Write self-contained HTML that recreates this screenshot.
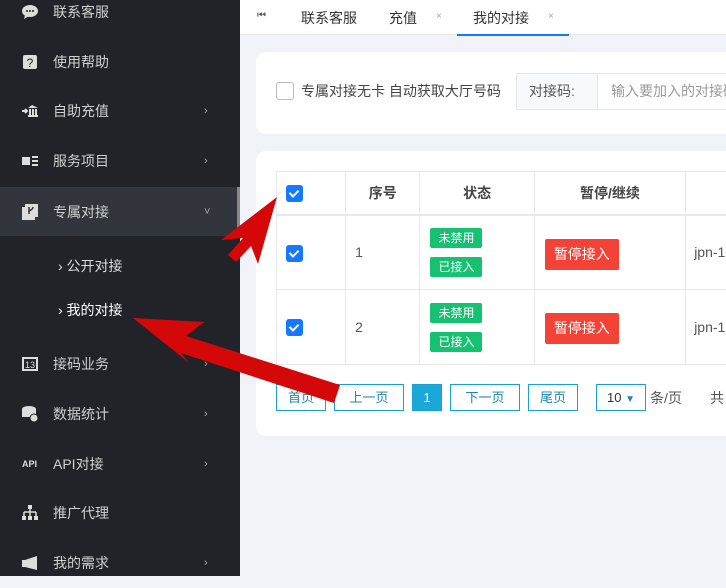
<!DOCTYPE html>
<html><head><meta charset="utf-8"><style>
*{margin:0;padding:0;box-sizing:border-box}
body{width:726px;height:576px;overflow:hidden;background:#f2f3f8;font-family:"Liberation Sans","Noto Sans CJK SC",sans-serif;position:relative}
.sb{position:absolute;left:0;top:0;width:240px;height:576px;background:#212329}
.it{position:absolute;left:0;width:240px;height:50px;color:#d0d0d0;font-size:14px;line-height:50px}
.it .t{position:absolute;left:53px}
.it .ic{position:absolute;left:22px;top:17px;width:16px;height:16px}
.it .ar{position:absolute;left:204px;font-size:11px;color:#aaa}
.sub{position:absolute;left:58px;color:#ddd;font-size:14px}
.top{position:absolute;left:240px;top:0;width:486px;height:35px;background:#fff;border-bottom:1px solid #e8e8e8;font-size:14px;color:#333}
.top span{position:absolute;top:8px}
.x{font-size:10px;color:#aaa;top:11px!important}
.card{position:absolute;left:256px;width:490px;background:#fff;border-radius:10px}
.cb{position:absolute;width:17px;height:17px;border-radius:3px;background:#1677ff}
.cb:after{content:"";position:absolute;left:5px;top:3px;width:4px;height:7px;border:solid #fff;border-width:0 2px 2px 0;transform:rotate(45deg)}
table{position:absolute;left:20px;top:20px;border-collapse:collapse;font-size:14px;color:#555}
td,th{border:1px solid #e8e8e8;position:relative}
th{height:43px;font-weight:bold;color:#444;border-bottom:2px solid #e8e8e8}
td{height:75px}
.tag{display:block;width:52px;height:20px;background:#16c172;color:#fff;font-size:12px;line-height:20px;text-align:center;border-radius:2px;margin:0 0 9px 10px}
.btn{position:absolute;left:10px;top:23px;width:74px;height:31px;background:#f44336;color:#fff;border-radius:2px;font-size:14px;line-height:31px;text-align:center}
.pg{position:absolute;top:384px;height:27px;border:1px solid #1aa0d4;color:#1a86b0;font-size:13px;line-height:25px;text-align:center;background:#fff}
</style></head><body>
<div class="sb">
<div class="it" style="top:-13px"><svg class="ic" viewBox="0 0 16 16"><ellipse cx="8" cy="7" rx="8" ry="6" fill="#ddd"/><path d="M3 11 L2 15 L7 12Z" fill="#ddd"/><circle cx="5" cy="7" r="1" fill="#212329"/><circle cx="8" cy="7" r="1" fill="#212329"/><circle cx="11" cy="7" r="1" fill="#212329"/></svg><span class="t">联系客服</span></div>
<div class="it" style="top:37px"><svg class="ic" viewBox="0 0 16 16"><rect x="1" y="1" width="14" height="14" rx="2" fill="#ddd"/><text x="8" y="13" font-size="12" text-anchor="middle" fill="#212329" font-family="Liberation Sans">?</text></svg><span class="t">使用帮助</span></div>
<div class="it" style="top:86px"><svg class="ic" viewBox="0 0 16 16"><path d="M0 8h4M3 6l2 2-2 2" stroke="#ddd" stroke-width="2" fill="none"/><path d="M10 2l6 3H6z M7 6h2v6H7z M10 6h2v6h-2z M13 6h2v6h-2z M6 12h10v2H6z" fill="#ddd"/></svg><span class="t">自助充值</span><span class="ar">›</span></div>
<div class="it" style="top:136px"><svg class="ic" viewBox="0 0 16 16"><rect x="0" y="4" width="8" height="8" fill="#ddd"/><path d="M10 4h6M10 8h6M10 12h6" stroke="#ddd" stroke-width="2"/></svg><span class="t">服务项目</span><span class="ar">›</span></div>
<div class="it" style="top:187px;background:#32353b;height:49px"><svg class="ic" viewBox="0 0 16 16"><rect x="3" y="0" width="13" height="13" fill="#ddd"/><rect x="0" y="3" width="3" height="13" fill="#ddd"/><rect x="0" y="13" width="13" height="3" fill="#ddd"/><path d="M7 3v7M11 3c0 3-4 3-4 5" stroke="#32353b" stroke-width="1.5" fill="none"/></svg><span class="t">专属对接</span><span class="ar">˅</span><div style="position:absolute;left:237px;top:0;width:3px;height:49px;background:#888"></div></div>
<div class="sub" style="top:256px">› 公开对接</div>
<div class="sub" style="top:300px;color:#fff">› 我的对接</div>
<div class="it" style="top:339px"><svg class="ic" viewBox="0 0 16 16"><rect x="0" y="1" width="16" height="14" fill="#ddd"/><rect x="2" y="3" width="12" height="10" fill="#212329"/><text x="8" y="12" font-size="9" text-anchor="middle" fill="#ddd">13</text></svg><span class="t">接码业务</span><span class="ar">›</span></div>
<div class="it" style="top:389px"><svg class="ic" viewBox="0 0 16 16"><ellipse cx="7" cy="3" rx="7" ry="3" fill="#ddd"/><rect x="0" y="3" width="14" height="8" fill="#ddd"/><circle cx="12" cy="12" r="4" fill="#ddd" stroke="#212329"/></svg><span class="t">数据统计</span><span class="ar">›</span></div>
<div class="it" style="top:439px"><span style="position:absolute;left:22px;font-size:9px;font-weight:bold;color:#ddd">API</span><span class="t">API对接</span><span class="ar">›</span></div>
<div class="it" style="top:488px"><svg class="ic" viewBox="0 0 16 16"><rect x="6" y="0" width="4" height="4" fill="#ddd"/><path d="M8 4v3M2 7h12M2 7v4M8 7v4M14 7v4" stroke="#ddd" stroke-width="1.5" fill="none"/><rect x="0" y="11" width="4" height="4" fill="#ddd"/><rect x="6" y="11" width="4" height="4" fill="#ddd"/><rect x="12" y="11" width="4" height="4" fill="#ddd"/></svg><span class="t">推广代理</span></div>
<div class="it" style="top:538px"><svg class="ic" viewBox="0 0 16 16"><path d="M0 5h3v7H0z M3 5l12-4v14L3 12z" fill="#ddd"/></svg><span class="t">我的需求</span><span class="ar">›</span></div>
</div>
<div class="top">
<span style="left:17px;font-size:10px;top:10px;color:#555">⏮</span>
<span style="left:61px">联系客服</span>
<span style="left:149px">充值</span><span class="x" style="left:196px">×</span>
<span style="left:233px">我的对接</span><span class="x" style="left:308px">×</span>
<div style="position:absolute;left:217px;top:34px;width:112px;height:2px;background:#1677ff"></div>
</div>
<div class="card" style="top:52px;height:82px">
<div style="position:absolute;left:20px;top:30px;width:18px;height:18px;border:1px solid #bbb;border-radius:3px"></div>
<div style="position:absolute;left:45px;top:29px;font-size:14px;color:#444">专属对接无卡 自动获取大厅号码</div>
<div style="position:absolute;left:260px;top:21px;width:260px;height:37px;border:1px solid #e6e6e6;border-radius:2px">
<div style="position:absolute;left:0;top:0;width:81px;height:35px;background:#f8f9fb;border-right:1px solid #e6e6e6;font-size:14px;color:#555;line-height:35px;padding-left:12px">对接码:</div>
<div style="position:absolute;left:94px;top:0;font-size:14px;color:#999;line-height:35px;white-space:nowrap">输入要加入的对接码</div></div>
</div>
<div class="card" style="top:151px;height:285px">
<table>
<tr><th style="width:70px"><div class="cb" style="left:9px;top:13px"></div></th><th style="width:75px">序号</th><th style="width:115px">状态</th><th style="width:153px">暂停/继续</th><th style="width:60px"></th></tr>
<tr><td><div class="cb" style="left:9px;top:29px"></div></td><td style="padding-left:9px">1</td><td><span class="tag">未禁用</span><span class="tag" style="margin-bottom:0">已接入</span></td><td><div class="btn">暂停接入</div></td><td style="padding-left:8px;white-space:nowrap">jpn-1</td></tr>
<tr><td><div class="cb" style="left:9px;top:29px"></div></td><td style="padding-left:9px">2</td><td><span class="tag">未禁用</span><span class="tag" style="margin-bottom:0">已接入</span></td><td><div class="btn">暂停接入</div></td><td style="padding-left:8px;white-space:nowrap">jpn-1</td></tr>
</table>
</div>
<div class="pg" style="left:276px;width:50px">首页</div>
<div class="pg" style="left:334px;width:70px">上一页</div>
<div class="pg" style="left:412px;width:30px;background:#1aa8d8;color:#fff">1</div>
<div class="pg" style="left:450px;width:70px">下一页</div>
<div class="pg" style="left:528px;width:50px">尾页</div>
<div class="pg" style="left:596px;width:50px;color:#333;text-align:left;padding-left:10px">10 <span style="color:#1a86b0;font-size:10px">▼</span></div>
<div style="position:absolute;left:650px;top:388px;font-size:14px;color:#555">条/页</div>
<div style="position:absolute;left:710px;top:388px;font-size:14px;color:#555">共</div>
<svg style="position:absolute;left:0;top:0" width="726" height="576">
<polygon points="277,197 221,240 243,238 228,255 236,262 251,246 258,264" fill="#d40808"/>
<polygon points="133,318 204,322 186,336 340,385 334,403 181,353 188,362" fill="#d40808"/>
</svg>
</body></html>
